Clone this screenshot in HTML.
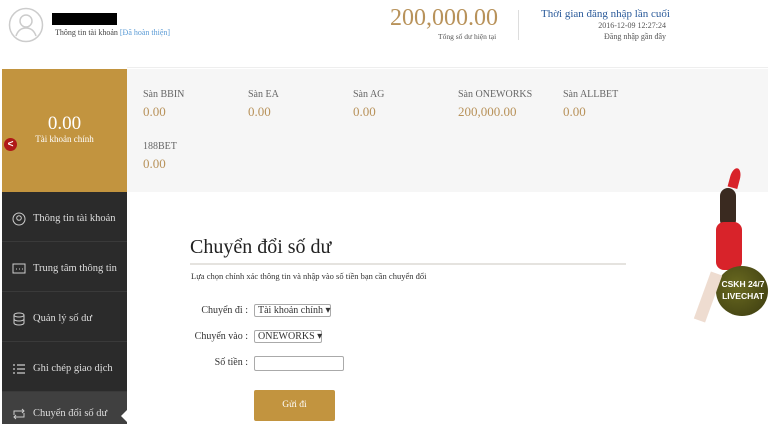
<!DOCTYPE html>
<html><head><meta charset="utf-8"><style>
*{margin:0;padding:0;box-sizing:border-box}
body{width:768px;height:424px;overflow:hidden;background:#fff;font-family:"Liberation Serif",serif;position:relative;color:#333}
.abs{position:absolute}
.gold{background:#c2943f}
.side{left:2px;top:192px;width:125px;height:232px;background:#2b2b2b}
.item{position:absolute;left:0;width:125px;height:50px;border-bottom:1px solid #3a3a3a;color:#ddd;font-size:10.5px;display:flex;align-items:center;padding-left:10px;padding-top:4px;white-space:nowrap}
.item svg{margin-right:7px}
.lbl{font-size:10px;color:#666}
.val{font-size:13px;color:#b8925a;margin-top:4px}
.sel{position:absolute;left:254px;height:13px;border:1px solid #aaa;border-radius:2px;font-size:10px;padding:0 3px;line-height:11px;color:#333;white-space:nowrap}
.fl{position:absolute;font-size:10px;text-align:right;width:68px;left:180px;white-space:nowrap}
</style></head><body>
<svg class="abs" style="left:8px;top:7px" width="36" height="36" viewBox="0 0 36 36"><circle cx="18" cy="18" r="16.5" fill="none" stroke="#ccc" stroke-width="1.5"/><circle cx="18" cy="14" r="6" fill="none" stroke="#ccc" stroke-width="1.5"/><path d="M8 29c2-6 6-8 10-8s8 2 10 8" fill="none" stroke="#ccc" stroke-width="1.5"/></svg>
<div class="abs" style="left:52px;top:13px;width:65px;height:12px;background:#000"></div>
<div class="abs" style="left:55px;top:28px;font-size:8px;color:#444">Thông tin tài khoản <span style="color:#5b9bd5">[Đã hoàn thiện]</span></div>
<div class="abs" style="left:390px;top:5px;font-size:24px;color:#b8925a">200,000.00</div>
<div class="abs" style="left:438px;top:32px;font-size:7.5px;color:#555">Tổng số dư hiện tại</div>
<div class="abs" style="left:518px;top:10px;width:1px;height:30px;background:#ddd"></div>
<div class="abs" style="left:541px;top:8px;font-size:11px;color:#2a5a9a">Thời gian đăng nhập lần cuối</div>
<div class="abs" style="right:102px;top:21px;font-size:8px;color:#555">2016-12-09 12:27:24</div>
<div class="abs" style="right:102px;top:32px;font-size:8px;color:#555">Đăng nhập gần đây</div>
<div class="abs" style="left:127px;top:67px;width:641px;height:1px;background:#eee"></div>
<div class="abs gold" style="left:2px;top:69px;width:125px;height:123px"></div>
<div class="abs" style="left:2px;top:113px;width:125px;text-align:center;color:#fff;font-size:19px">0.00</div>
<div class="abs" style="left:2px;top:134px;width:125px;text-align:center;color:#fff;font-size:9px">Tài khoản chính</div>
<div class="abs" style="left:4px;top:138px;width:13px;height:13px;border-radius:50%;background:#b01818;color:#fff;font:bold 10px/13px 'Liberation Sans',sans-serif;text-align:center">&lt;</div>
<div class="abs" style="left:127px;top:69px;width:641px;height:123px;background:#f6f6f6"></div>
<div class="abs" style="left:143px;top:89px"><div class="lbl">Sàn BBIN</div><div class="val">0.00</div></div>
<div class="abs" style="left:248px;top:89px"><div class="lbl">Sàn EA</div><div class="val">0.00</div></div>
<div class="abs" style="left:353px;top:89px"><div class="lbl">Sàn AG</div><div class="val">0.00</div></div>
<div class="abs" style="left:458px;top:89px"><div class="lbl">Sàn ONEWORKS</div><div class="val">200,000.00</div></div>
<div class="abs" style="left:563px;top:89px"><div class="lbl">Sàn ALLBET</div><div class="val">0.00</div></div>
<div class="abs" style="left:143px;top:141px"><div class="lbl">188BET</div><div class="val">0.00</div></div>
<div class="abs side">
<div class="item" style="top:0"><svg width="14" height="14"><circle cx="7" cy="7" r="6" fill="none" stroke="#ccc"/><circle cx="7" cy="6" r="2.3" fill="none" stroke="#ccc"/></svg>Thông tin tài khoản</div>
<div class="item" style="top:50px"><svg width="14" height="12"><rect x="1" y="1" width="12" height="9" fill="none" stroke="#ccc"/><path d="M4 6h1M7 6h1M10 6h1" stroke="#ccc"/></svg>Trung tâm thông tin</div>
<div class="item" style="top:100px"><svg width="14" height="14"><ellipse cx="7" cy="3" rx="5" ry="2" fill="none" stroke="#ccc"/><path d="M2 3v8c0 1 2 2 5 2s5-1 5-2V3M2 7c0 1 2 2 5 2s5-1 5-2" fill="none" stroke="#ccc"/></svg>Quản lý số dư</div>
<div class="item" style="top:150px"><svg width="14" height="12"><path d="M1 2h2M1 6h2M1 10h2M5 2h8M5 6h8M5 10h8" stroke="#ccc" stroke-width="1.3"/></svg>Ghi chép giao dịch</div>
<div class="item" style="top:200px;background:#404040;height:32px;border:0;align-items:flex-start;padding-top:16px"><svg width="14" height="12"><path d="M2 7V3h10M10 1l2 2-2 2M12 5v4H2M4 11l-2-2 2-2" fill="none" stroke="#ccc"/></svg>Chuyển đổi số dư</div>
</div>
<div class="abs" style="left:121px;top:410px;width:0;height:0;border-top:6px solid transparent;border-bottom:6px solid transparent;border-right:6px solid #fff"></div>
<div class="abs" style="left:190px;top:236px;font-size:20px;color:#222">Chuyển đổi số dư</div>
<div class="abs" style="left:190px;top:263px;width:436px;height:2px;background:#e5e3df"></div>
<div class="abs" style="left:191px;top:271px;font-size:8.5px;color:#333">Lựa chọn chính xác thông tin và nhập vào số tiền bạn cần chuyển đổi</div>
<div class="fl" style="top:305px">Chuyển đi :</div>
<div class="sel" style="top:304px;width:77px">Tài khoản chính ▾</div>
<div class="fl" style="top:331px">Chuyển vào :</div>
<div class="sel" style="top:330px;width:68px">ONEWORKS ▾</div>
<div class="fl" style="top:357px">Số tiền :</div>
<div class="abs" style="left:254px;top:356px;width:90px;height:15px;border:1px solid #aaa;border-radius:2px"></div>
<div class="abs gold" style="left:254px;top:390px;width:81px;height:31px;border-radius:2px;color:#fff;font-size:9.5px;text-align:center;line-height:31px">Gửi đi</div>
<div class="abs" style="left:730px;top:168px;width:10px;height:20px;border-radius:50% 50% 0 0;background:#d8232a;transform:rotate(15deg)"></div>
<div class="abs" style="left:720px;top:188px;width:16px;height:40px;border-radius:8px;background:#3a2a20"></div>
<div class="abs" style="left:716px;top:222px;width:26px;height:48px;border-radius:8px;background:#d8232a"></div>
<div class="abs" style="left:716px;top:266px;width:52px;height:50px;border-radius:50%;background:radial-gradient(circle at 40% 40%,#6a6a20,#3a3a10)"></div>
<div class="abs" style="left:702px;top:272px;width:12px;height:50px;background:#eedcd0;transform:rotate(20deg)"></div>
<div class="abs" style="left:718px;top:278px;font:bold 8.5px 'Liberation Sans',sans-serif;color:#fff;text-align:center;width:50px;line-height:12px">CSKH 24/7<br>LIVECHAT</div>
</body></html>
